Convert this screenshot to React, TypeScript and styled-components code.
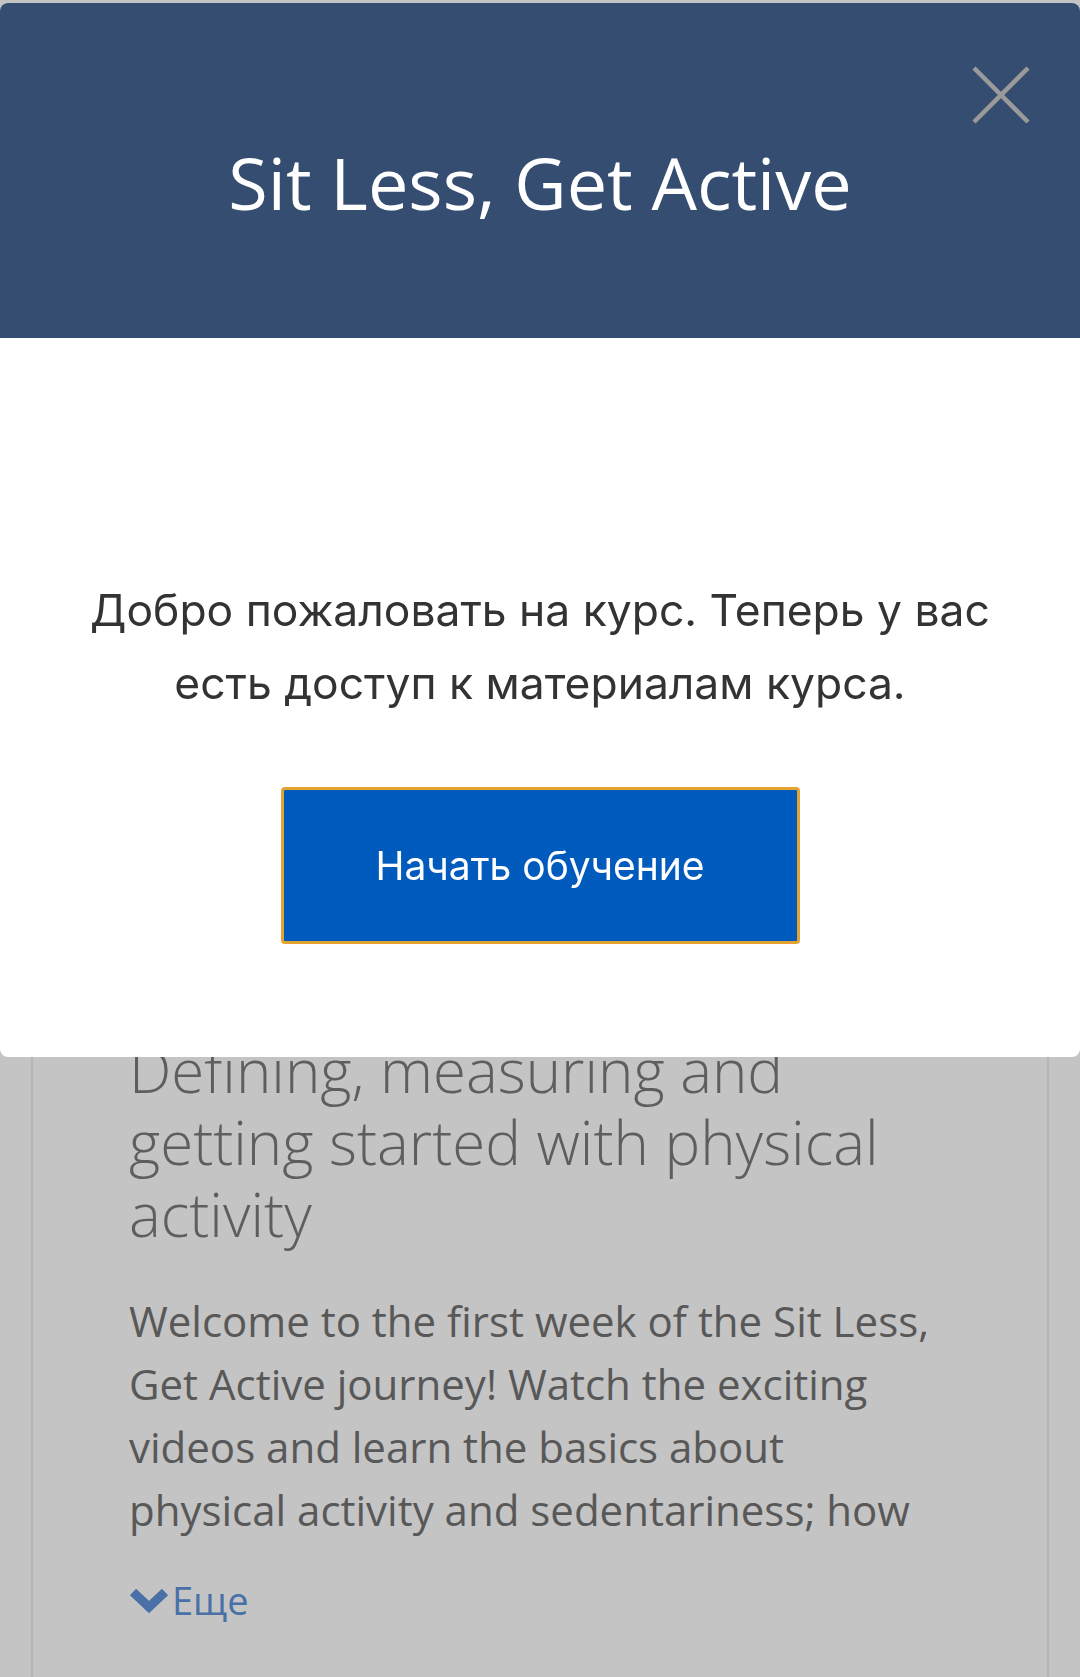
import React from "react";
import styled, { createGlobalStyle } from "styled-components";

const Global = createGlobalStyle`
  html, body { margin: 0; padding: 0; background: #ffffff; }
  body { font-family: "Open Sans", "Liberation Sans", sans-serif; }
  * { box-sizing: border-box; }
`;

const Page = styled.div`
  min-height: 1677px;
  padding-top: 1034px;
  background: #ffffff;
`;

const Card = styled.section`
  margin: 0 31px;
  min-height: 643px;
  border-left: 2px solid #ebebeb;
  border-right: 2px solid #ebebeb;
  padding: 0 107px 0 96px;
`;

const WeekTitle = styled.h2`
  margin: 0;
  font-family: "Open Sans", sans-serif;
  font-weight: 300;
  font-size: 60px;
  line-height: 72px;
  color: #7b7b7b;
`;

const WeekText = styled.p`
  margin: 39px 0 0;
  font-family: "Open Sans", sans-serif;
  font-size: 42px;
  line-height: 63px;
  color: #737373;
`;

const MoreLink = styled.a`
  margin-top: 31px;
  display: inline-flex;
  align-items: center;
  gap: 3px;
  font-family: "Open Sans", sans-serif;
  font-size: 38px;
  line-height: 57px;
  color: #6094da;
  text-decoration: none;
`;

const Overlay = styled.div`
  position: fixed;
  inset: 0;
  background: rgba(0, 0, 0, 0.231);
`;

const Modal = styled.div`
  position: fixed;
  top: 3px;
  left: 0;
  right: 0;
  display: flex;
  flex-direction: column;
  border-radius: 8px;
  overflow: hidden;
  background: #ffffff;
`;

const Header = styled.header`
  position: relative;
  height: 335px;
  padding-top: 136px;
  background: #364d72;
  text-align: center;
`;

const Title = styled.h1`
  margin: 0;
  font-family: "Open Sans", sans-serif;
  font-weight: 400;
  font-size: 72px;
  line-height: 86px;
  color: #ffffff;
`;

const CloseButton = styled.button`
  position: absolute;
  top: 61px;
  right: 48px;
  width: 62px;
  height: 62px;
  padding: 0;
  border: 0;
  background: transparent;
  display: flex;
  align-items: center;
  justify-content: center;
  cursor: pointer;
`;

const Body = styled.div`
  height: 719px;
  padding: 236px 72px 0;
  display: flex;
  flex-direction: column;
  align-items: center;
`;

const Message = styled.p`
  margin: 0;
  font-family: Inter, Roboto, "Noto Sans", sans-serif;
  font-size: 44.4px;
  line-height: 73px;
  color: #333333;
  text-align: center;
`;

const StartButton = styled.button`
  margin-top: 67px;
  width: 519px;
  height: 157px;
  border: 3px solid #e3a232;
  border-radius: 4px;
  background: #005bbd;
  color: #ffffff;
  font-family: Inter, Roboto, "Noto Sans", sans-serif;
  font-size: 39px;
  cursor: pointer;
`;

const Chevron = () => (
  <svg width="40" height="28" viewBox="0 0 40 28" aria-hidden="true">
    <path d="M4 5 L20 20 L36 5" fill="none" stroke="currentColor" strokeWidth="9" strokeLinejoin="miter" />
  </svg>
);

const CloseIcon = () => (
  <svg width="60" height="60" viewBox="0 0 60 60" aria-hidden="true">
    <path d="M3 3 L57 57 M57 3 L3 57" stroke="#9a9a9a" strokeWidth="4.5" fill="none" />
  </svg>
);

export default function App() {
  return (
    <>
      <Global />
      <Page>
        <Card>
          <WeekTitle>Defining, measuring and getting started with physical activity</WeekTitle>
          <WeekText>
            Welcome to the first week of the Sit Less, Get Active journey! Watch the exciting videos and learn the
            basics about physical activity and sedentariness; how
          </WeekText>
          <MoreLink href="#">
            <Chevron />
            Еще
          </MoreLink>
        </Card>
      </Page>
      <Overlay />
      <Modal role="dialog" aria-modal="true">
        <Header>
          <Title>Sit Less, Get Active</Title>
          <CloseButton aria-label="Close">
            <CloseIcon />
          </CloseButton>
        </Header>
        <Body>
          <Message>Добро пожаловать на курс. Теперь у вас есть доступ к материалам курса.</Message>
          <StartButton>Начать обучение</StartButton>
        </Body>
      </Modal>
    </>
  );
}
